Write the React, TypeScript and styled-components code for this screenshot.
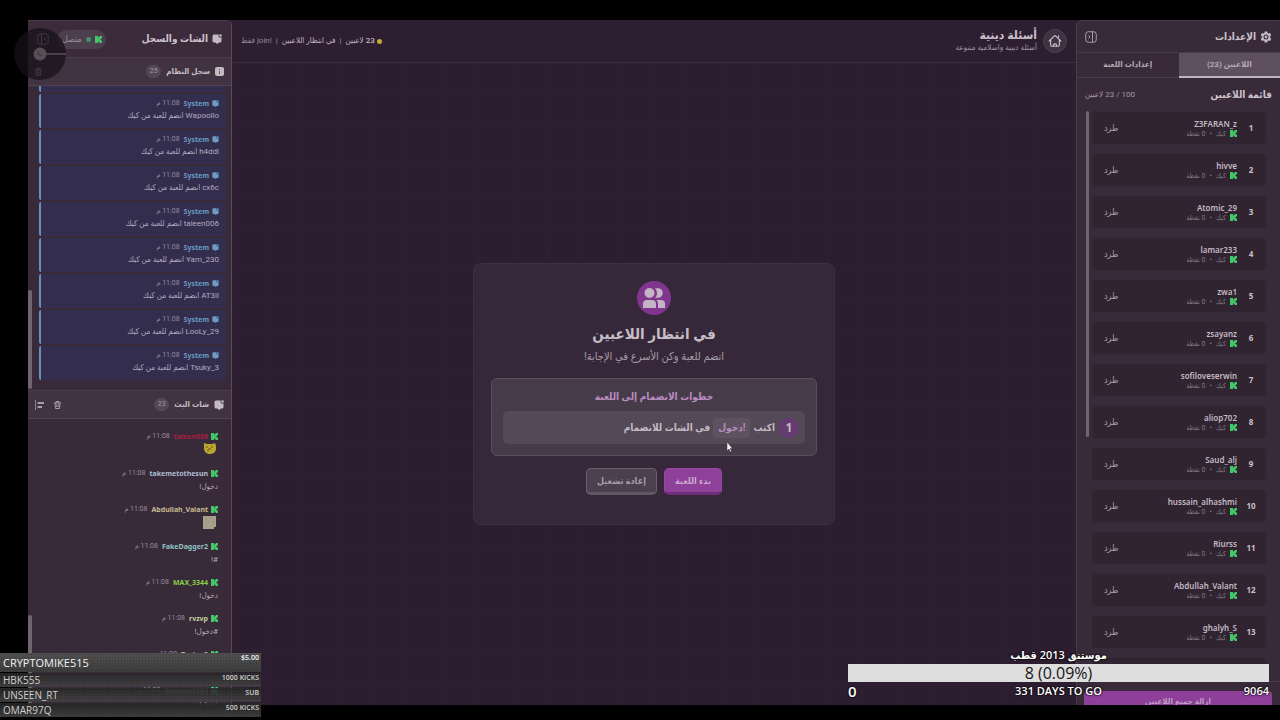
import React from "react";
import styled, { createGlobalStyle } from "styled-components";

const GlobalStyle = createGlobalStyle`
  *, *::before, *::after { box-sizing: border-box; }
  body {
    margin: 0;
    background: #000;
    color: #c2b8c2;
    font-family: Roboto, "DejaVu Sans Condensed", "DejaVu Sans", sans-serif;
    font-size: 9px;
    line-height: 14px;
  }
  h1, h2, h3, p, ul, ol { margin: 0; padding: 0; font-weight: inherit; font-size: inherit; }
  ul, ol { list-style: none; }
  button { font: inherit; color: inherit; padding: 0; border: 0; background: none; cursor: pointer; }
`;

const line = "rgba(255, 255, 255, 0.08)";

const Screen = styled.div`
  position: relative;
  height: 100vh;
  overflow: hidden;
  padding: 20px 0 15px 28px;
`;

const Stage = styled.div`
  display: grid;
  grid-template-columns: 204px minmax(0, 1fr) 204px;
  height: 100%;
  overflow: hidden;
  background: #2d1d30;
`;

const Panel = styled.aside<{ $side: "left" | "right" }>`
  display: flex;
  flex-direction: column;
  min-height: 0;
  overflow: hidden;
  background: #392a3a;
  border-top: 1px solid #4b3b4c;
  ${(p) =>
    p.$side === "right"
      ? "border-left: 1px solid #4b3b4c; border-top-left-radius: 6px;"
      : "border-right: 1px solid #5a4a5a; border-top-right-radius: 6px;"}
`;

const Title = styled.h2`
  display: flex;
  align-items: center;
  gap: 4px;
  font-size: 10px;
  font-weight: 700;
  color: #cbc2cb;
`;

const IconButton = styled.button`
  display: flex;
  align-items: center;
  justify-content: center;
  color: #a89da8;
`;

/* settings panel */

const SettingsHeader = styled.header`
  display: flex;
  align-items: center;
  justify-content: space-between;
  flex: none;
  height: 32px;
  padding: 0 8px;
  border-bottom: 1px solid ${line};
`;

const Tabs = styled.div`
  display: grid;
  grid-template-columns: 1fr 1fr;
  flex: none;
  height: 25px;
`;

const Tab = styled.button<{ $active?: boolean }>`
  font-size: 8px;
  font-weight: 700;
  color: #b5abb5;
  background: ${(p) => (p.$active ? "#5e505e" : "transparent")};
  border-bottom: ${(p) => (p.$active ? "2px solid #bdb5bd" : `1px solid ${line}`)};
`;

const ListHeading = styled.div`
  display: flex;
  align-items: center;
  justify-content: space-between;
  flex: none;
  height: 33px;
  padding: 0 8px;
`;

const Muted = styled.span`
  font-size: 8px;
  color: #a398a3;
`;

const ScrollArea = styled.div`
  display: flex;
  flex: 1;
  min-height: 0;
  overflow: hidden;
`;

const PlayerScroll = styled(ScrollArea)`
  gap: 2px;
  padding: 0 13px 0 9px;
`;

const PlayerList = styled.ol`
  display: flex;
  flex-direction: column;
  gap: 8px;
  flex: 1;
  min-width: 0;
`;

const PlayerCard = styled.li`
  display: flex;
  align-items: center;
  flex: none;
  height: 34px;
  padding: 0 7px 0 12px;
  background: #2f2430;
  border: 1px solid #362a37;
  border-radius: 4px;
`;

const Rank = styled.span`
  width: 16px;
  text-align: center;
  font-family: "Noto Sans", sans-serif;
  font-size: 8px;
  font-weight: 700;
  color: #c9c0c9;
`;

const PlayerInfo = styled.div`
  flex: 1;
  min-width: 0;
  padding-right: 6px;
`;

const PlayerName = styled.div`
  font-family: "Noto Sans", sans-serif;
  font-size: 8px;
  line-height: 11px;
  font-weight: 600;
  color: #c4bac4;
`;

const PlayerMeta = styled.div`
  display: flex;
  align-items: center;
  gap: 4px;
  font-size: 7px;
  line-height: 10px;
  color: #857a86;
`;

const KickButton = styled.button`
  font-size: 9px;
  color: #a99eaa;
`;

const Thumb = styled.span<{ $length: number; $end?: number; $wide?: boolean }>`
  flex: none;
  width: ${(p) => (p.$wide ? 4 : 3)}px;
  height: ${(p) => p.$length}px;
  margin-top: ${(p) => (p.$end === undefined ? "0" : "auto")};
  margin-bottom: ${(p) => p.$end ?? 0}px;
  border-radius: 2px;
  background: #706470;
`;

const PanelFooter = styled.footer`
  flex: none;
  height: 24px;
  padding: 9px 8px 0 7px;
  overflow: hidden;
  border-top: 1px solid ${line};
`;

const RemoveAll = styled.button`
  display: block;
  width: 100%;
  height: 22px;
  border-radius: 4px;
  background: #8d3f99;
  color: #bf9cc4;
  font-size: 8px;
  font-weight: 700;
`;

/* centre */

const Center = styled.main`
  display: flex;
  flex-direction: column;
  min-width: 0;
  background-image: repeating-linear-gradient(90deg, rgba(255, 255, 255, 0.012) 0 1px, transparent 1px 35px),
    repeating-linear-gradient(180deg, rgba(255, 255, 255, 0.012) 0 1px, transparent 1px 35px);
`;

const GameHeader = styled.header`
  display: flex;
  align-items: center;
  justify-content: space-between;
  flex: none;
  height: 43px;
  padding: 0 9px;
  background: #2e1e31;
  border-bottom: 1px solid #3d2d40;
`;

const GameBrand = styled.div`
  display: flex;
  align-items: center;
  gap: 6px;
`;

const HomeButton = styled(IconButton)`
  width: 24px;
  height: 24px;
  border-radius: 50%;
  background: #403242;
  border: 1px solid #4d3f4f;
  color: #c6bdc6;
`;

const GameTitle = styled.h1`
  font-size: 12px;
  font-weight: 700;
  color: #c9c0c9;
`;

const GameSubtitle = styled.p`
  font-size: 8px;
  line-height: 12px;
  color: #a096a4;
`;

const Status = styled.div`
  display: flex;
  align-items: center;
  gap: 4px;
  font-size: 8px;
  color: #94899a;
`;

const StatusItem = styled.span`
  display: flex;
  align-items: center;
  gap: 2px;
  font-weight: 500;
  color: #c0b7c2;
`;

const Dot = styled.span<{ $color: string }>`
  width: 5px;
  height: 5px;
  border-radius: 50%;
  background: ${(p) => p.$color};
`;

const Board = styled.div`
  display: flex;
  align-items: center;
  justify-content: center;
  flex: 1;
  padding: 20px 0 0;
`;

const WaitCard = styled.section`
  display: flex;
  flex-direction: column;
  align-items: center;
  width: 362px;
  padding: 17px 17px 29px;
  background: #36283a;
  border: 1px solid #3e3042;
  border-radius: 8px;
`;

const PeopleBadge = styled.div`
  display: flex;
  align-items: center;
  justify-content: center;
  width: 34px;
  height: 34px;
  border-radius: 50%;
  background: #80368c;
`;

const WaitTitle = styled.h2`
  margin-top: 7px;
  font-size: 15px;
  line-height: 24px;
  font-weight: 700;
  color: #c6bec6;
`;

const WaitText = styled.p`
  margin-top: 4px;
  font-size: 11px;
  line-height: 14px;
  color: #a79da9;
`;

const Steps = styled.div`
  width: 100%;
  margin-top: 14px;
  padding: 11px 11px;
  border: 1px solid #5a4e5d;
  border-radius: 6px;
  background: #463b49;
`;

const StepsTitle = styled.h3`
  font-size: 10px;
  line-height: 14px;
  font-weight: 700;
  text-align: center;
  color: #b98bc0;
`;

const Step = styled.div`
  display: flex;
  align-items: center;
  gap: 3px;
  height: 33px;
  margin-top: 7px;
  padding: 0 6px;
  border-radius: 5px;
  background: #534957;
  font-size: 10px;
  font-weight: 700;
  color: #c3bac4;
`;

const StepNumber = styled.span`
  width: 20px;
  height: 20px;
  margin-left: 1px;
  border-radius: 50%;
  background: #653a70;
  font-family: "Noto Sans", sans-serif;
  font-size: 12px;
  line-height: 20px;
  text-align: center;
`;

const Command = styled.code`
  padding: 0 5px;
  border-radius: 4px;
  background: #5e5160;
  color: #b48bbb;
  font-family: inherit;
  font-size: 10px;
  line-height: 20px;
`;

const Actions = styled.div`
  display: flex;
  gap: 7px;
  margin-top: 12px;
`;

const ActionButton = styled.button<{ $primary?: boolean }>`
  height: 27px;
  padding: 0 10px;
  border-radius: 5px;
  font-size: 9px;
  font-weight: 700;
  border: 1px solid ${(p) => (p.$primary ? "#96479f" : "#6b606d")};
  border-bottom-width: 3px;
  border-bottom-color: ${(p) => (p.$primary ? "#6f2d7b" : "#625764")};
  background: ${(p) => (p.$primary ? "#8f4099" : "#4b404d")};
  color: ${(p) => (p.$primary ? "#ccaad0" : "#a89eaa")};
`;

/* chat panel */

const ChatHeader = styled.header`
  display: flex;
  align-items: center;
  flex: none;
  height: 36px;
  padding: 0 9px;
  gap: 8px;
  background: #3c2b3b;
`;

const Connected = styled.span`
  display: flex;
  align-items: center;
  gap: 4px;
  height: 19px;
  margin-right: auto;
  padding: 0 4px 0 5px;
  border-radius: 10px;
  background: #4d3e4d;
  font-size: 9px;
  color: #988d98;
`;

const SectionBar = styled.div`
  display: flex;
  align-items: center;
  gap: 5px;
  flex: none;
  height: 29px;
  padding: 0 7px;
  background: #423342;
  border-top: 1px solid #4b3c4b;
  border-bottom: 1px solid #524352;
`;

const SectionTitle = styled.h3`
  font-size: 8px;
  font-weight: 700;
  color: #c4bbc4;
`;

const Count = styled.span`
  min-width: 15px;
  height: 13px;
  border-radius: 7px;
  background: #554755;
  font-size: 7px;
  line-height: 13px;
  text-align: center;
  color: #a095a8;
`;

const BarTools = styled.div`
  display: flex;
  gap: 10px;
  margin-right: auto;
`;

const LogArea = styled(ScrollArea)`
  flex: none;
  height: 304px;
`;

const LogList = styled.ul`
  display: flex;
  flex-direction: column;
  justify-content: flex-end;
  gap: 2px;
  flex: 1;
  padding: 0 5px 10px 7px;
`;

const LogItem = styled.li`
  flex: none;
  height: 34px;
  padding: 3px 7px;
  background: #332d4e;
  border-left: 2px solid #6592b8;
  border-radius: 2px;
`;

const LineHead = styled.div`
  display: flex;
  align-items: center;
  gap: 3px;
  font-size: 7px;
  line-height: 13px;
`;

const Author = styled.strong<{ $color: string }>`
  font-family: "Noto Sans", sans-serif;
  color: ${(p) => p.$color};
`;

const Time = styled.time`
  padding-right: 1px;
  color: #978c9a;
`;

const LogText = styled.p`
  font-size: 8px;
  line-height: 12px;
  color: #b4abc0;
`;

const ChatList = styled.ul`
  flex: 1;
  min-width: 0;
  padding: 11px 13px 0;
`;

const ChatItem = styled.li`
  padding-bottom: 9px;
  font-size: 8px;
`;

const ChatText = styled.p`
  line-height: 14px;
  color: #b5abb5;
`;

const EmoteLine = styled.div`
  display: flex;
  height: 15px;
  padding: 0 2px;
`;

/* stream overlays */

const Alerts = styled.ul`
  position: absolute;
  left: 0;
  bottom: 3px;
  width: 261px;
  display: flex;
  flex-direction: column;
  gap: 1px;
  direction: ltr;
  font-family: "Open Sans", "Noto Sans", sans-serif;
`;

const Alert = styled.li<{ $top?: boolean }>`
  display: flex;
  justify-content: space-between;
  height: ${(p) => (p.$top ? 19 : 14)}px;
  padding: 0 2px 0 3px;
  background-image: radial-gradient(rgba(0, 0, 0, 0.2) 1px, transparent 1px),
    linear-gradient(${(p) => (p.$top ? "#505050, #3c3c3c" : "rgba(40, 40, 40, 0.9), rgba(68, 68, 68, 0.9)")});
  background-size: 3px 3px, auto;
  font-size: ${(p) => (p.$top ? 11 : 10)}px;
  line-height: ${(p) => (p.$top ? 19 : 14)}px;
  font-weight: ${(p) => (p.$top ? 500 : 400)};
  color: ${(p) => (p.$top ? "#f2f2f2" : "#cfcfcf")};
`;

const Amount = styled.span`
  font-size: 7px;
  line-height: 10px;
  font-weight: 600;
`;

const Goal = styled.section`
  position: absolute;
  right: 11px;
  bottom: 20px;
  width: 421px;
  direction: ltr;
  font-family: "Open Sans", "DejaVu Sans Condensed", "DejaVu Sans", sans-serif;
  font-weight: 600;
  color: #fff;
  text-shadow: 0 0 2px #000, 0 0 2px #000;
`;

const GoalTitle = styled.h2`
  font-size: 11px;
  line-height: 18px;
  font-weight: 600;
  text-align: center;
`;

const GoalBar = styled.div`
  height: 18px;
  background: #dedede;
  color: #161616;
  font-size: 16px;
  line-height: 19px;
  font-weight: 400;
  text-align: center;
  text-shadow: none;
`;

const GoalScale = styled.div`
  display: grid;
  grid-template-columns: 1fr auto 1fr;
  height: 18px;
  font-size: 11px;
  line-height: 18px;
  & > :last-child { text-align: right; }
`;

const GoalStart = styled.span`
  font-size: 15px;
`;

const Facecam = styled.div`
  position: absolute;
  left: 14px;
  top: 28px;
  width: 52px;
  height: 52px;
`;

const Pointer = styled.div`
  position: absolute;
  left: 726px;
  top: 442px;
`;

/* icons */

const KickLogo = ({ size = 7 }: { size?: number }) => (
  <svg width={size} height={size} viewBox="0 0 9 9" fill="#43c56a" aria-hidden="true">
    <path d="M0 0h4v2h1V1h1V0h3v3H8v1H7v1h1v1h1v3H6V8H5V7H4v2H0z" />
  </svg>
);

const ChatIcon = ({ size = 10, color = "#c4bac4" }: { size?: number; color?: string }) => (
  <svg width={size} height={size} viewBox="0 0 20 20" aria-hidden="true">
    <path
      fill={color}
      d="M4 1h10a3.500 3.500 0 0 0 5 5v8a3 3 0 0 1-3 3h-2l-4 3-3-3H4a3 3 0 0 1-3-3V4a3 3 0 0 1 3-3z"
    />
    <circle cx="17" cy="3" r="2.500" fill={color} />
  </svg>
);

const GearIcon = () => (
  <svg width="12" height="12" viewBox="0 0 24 24" aria-hidden="true">
    <path
      fill="#c4bac4"
      fillRule="evenodd"
      d="M9.500 1h5l.7 3.200 1.800 1 3.100-1 2.500 4.300-2.400 2.200v2.600l2.400 2.200-2.500 4.300-3.100-1-1.800 1-.7 3.200h-5l-.7-3.200-1.800-1-3.100 1L1.400 15.500l2.400-2.200v-2.600L1.400 8.500l2.500-4.300 3.100 1 1.800-1zM12 7a5 5 0 1 0 0 10 5 5 0 0 0 0-10zm0 2.200a2.800 2.800 0 1 1 0 5.600 2.800 2.800 0 0 1 0-5.600z"
    />
  </svg>
);

const CollapseIcon = ({ flip }: { flip?: boolean }) => (
  <svg width="12" height="12" viewBox="0 0 24 24" fill="none" stroke="currentColor" strokeWidth="2" aria-hidden="true">
    <rect x="1.500" y="1.500" width="21" height="21" rx="5" />
    <path d={flip ? "M9 2v20M17 9l-3 3 3 3" : "M15 2v20M7 9l3 3-3 3"} />
  </svg>
);

const HomeIcon = () => (
  <svg
    width="14"
    height="14"
    viewBox="0 0 24 24"
    fill="none"
    stroke="currentColor"
    strokeWidth="2"
    strokeLinecap="round"
    strokeLinejoin="round"
    aria-hidden="true"
  >
    <path d="M2 12 10.500 3.500a2 2 0 0 1 3 0L22 12M4.500 10v9a2 2 0 0 0 2 2h11a2 2 0 0 0 2-2v-9M18 5V3" />
    <path d="M9 21a3 4 0 0 1 6 0" />
  </svg>
);

const PeopleIcon = () => (
  <svg width="22" height="20" viewBox="0 0 22 20" fill="#c3b5c5" aria-hidden="true">
    <circle cx="6.500" cy="5" r="5" />
    <path d="M0 20v-4a4 4 0 0 1 4-4h5a4 4 0 0 1 4 4v4zM12 .2h3a4.800 4.800 0 0 1 0 9.600h-3a6.500 6.500 0 0 0 0-9.600zM13.500 12H18a4 4 0 0 1 4 4v4h-7v-4a6 6 0 0 0-1.500-4z" />
  </svg>
);

const InfoIcon = () => (
  <svg width="9" height="9" viewBox="0 0 18 18" aria-hidden="true">
    <rect width="18" height="18" rx="4" fill="#c4bac4" />
    <path d="M9 8v6M9 4v2" stroke="#6a5c6a" strokeWidth="2" />
  </svg>
);

const TrashIcon = () => (
  <svg width="7" height="8" viewBox="0 0 14 16" fill="none" stroke="currentColor" strokeWidth="2" aria-hidden="true">
    <path d="M0 4h14M4 4V1h6v3M2 4l1 11h8l1-11M5.500 7v5M8.500 7v5" />
  </svg>
);

const AlignIcon = () => (
  <svg width="9" height="10" viewBox="0 0 18 20" stroke="currentColor" aria-hidden="true">
    <path d="M1 0v20" strokeWidth="1.500" />
    <path d="M5 6h13M5 14h9" strokeWidth="4" />
  </svg>
);

const CatEmote = () => (
  <svg width="12" height="11" viewBox="0 0 12 11" role="img" aria-label="emote">
    <path d="M0 0l3 1h5l3-1 1 3v4l-2 3-3 1H4L1 9 0 6z" fill="#b9a52f" />
    <path d="M2 4h2M7 4h2M4 6h3M3 8l2-1" stroke="#5d4a20" strokeWidth="0.800" />
  </svg>
);

const PaperEmote = () => (
  <svg width="13" height="13" viewBox="0 0 13 13" role="img" aria-label="emote">
    <path d="M0 0h13v11l-1 2H0z" fill="#a9a08c" />
    <path d="M2 3h2M7 2h2M4 6h2M9 6h2M2 9h2M8 9h1" stroke="#968c79" />
    <path d="M11 11h2v2h-2z" fill="#333" />
  </svg>
);

/* data */

const players = [
  "Z3FARAN_z", "hivve", "Atomic_29", "lamar233", "zwa1", "zsayanz", "sofiloveserwin",
  "aliop702", "Saud_alj", "hussain_alhashmi", "Riurss", "Abdullah_Valant", "ghalyh_S", "Tsuky_3",
];

const joins = ["Z3FARAN_z", "Wapoollo", "h4ddl", "cx6c", "taleen006", "Yam_230", "AT3ll", "LooLy_29", "Tsuky_3"];

type Message = { name: string; color: string; text?: string; emote?: React.ReactNode };

const messages: Message[] = [
  { name: "taleen006", color: "#a51f45", emote: <CatEmote /> },
  { name: "takemetothesun", color: "#a9bfd0", text: "دخول!" },
  { name: "Abdullah_Valant", color: "#c5b98c", emote: <PaperEmote /> },
  { name: "FakeDagger2", color: "#8fc3c4", text: "#!" },
  { name: "MAX_3344", color: "#86cf45", text: "دخول!" },
  { name: "rvzvp", color: "#bdcf9a", text: "#دخول!" },
  { name: "Tsuky_3", color: "#b8b3a8", text: "دخول!" },
  { name: "Kasema1234", color: "#b8b3b8", text: "دخول!" },
];

const Stamp = () => <Time>11:08 م</Time>;

export default function App() {
  return (
    <Screen dir="rtl" lang="ar">
      <GlobalStyle />
      <Stage>
        <Panel $side="right">
          <SettingsHeader>
            <Title><GearIcon />الإعدادات</Title>
            <IconButton aria-label="طي الإعدادات"><CollapseIcon /></IconButton>
          </SettingsHeader>
          <Tabs role="tablist">
            <Tab role="tab" aria-selected="true" $active>اللاعبين (23)</Tab>
            <Tab role="tab" aria-selected="false">إعدادات اللعبة</Tab>
          </Tabs>
          <ListHeading>
            <Title as="h3">قائمة اللاعبين</Title>
            <Muted>100 / 23 لاعبين</Muted>
          </ListHeading>
          <PlayerScroll>
            <PlayerList>
              {players.map((name, i) => (
                <PlayerCard key={name}>
                  <Rank>{i + 1}</Rank>
                  <PlayerInfo>
                    <PlayerName>{name}</PlayerName>
                    <PlayerMeta>
                      <KickLogo />
                      <span>كيك</span>
                      <span>•</span>
                      <span>0 نقطة</span>
                    </PlayerMeta>
                  </PlayerInfo>
                  <KickButton>طرد</KickButton>
                </PlayerCard>
              ))}
            </PlayerList>
            <Thumb $length={326} />
          </PlayerScroll>
          <PanelFooter>
            <RemoveAll>ازالة جميع اللاعبين</RemoveAll>
          </PanelFooter>
        </Panel>

        <Center>
          <GameHeader>
            <GameBrand>
              <HomeButton aria-label="الرئيسية"><HomeIcon /></HomeButton>
              <div>
                <GameTitle>أسئلة دينية</GameTitle>
                <GameSubtitle>أسئلة دينية واسلامية متنوعة</GameSubtitle>
              </div>
            </GameBrand>
            <Status>
              <StatusItem><Dot $color="#c5ad35" />23 لاعبين</StatusItem>
              <span>|</span>
              <StatusItem>في انتظار اللاعبين</StatusItem>
              <span>|</span>
              <span>!join فقط</span>
            </Status>
          </GameHeader>
          <Board>
            <WaitCard>
              <PeopleBadge><PeopleIcon /></PeopleBadge>
              <WaitTitle>في انتظار اللاعبين</WaitTitle>
              <WaitText>انضم للعبة وكن الأسرع في الإجابة!</WaitText>
              <Steps>
                <StepsTitle>خطوات الانضمام إلى اللعبة</StepsTitle>
                <Step>
                  <StepNumber>1</StepNumber>
                  <span>اكتب</span>
                  <Command>!دخول</Command>
                  <span>في الشات للانضمام</span>
                </Step>
              </Steps>
              <Actions>
                <ActionButton $primary>بدء اللعبة</ActionButton>
                <ActionButton>إعادة تشغيل</ActionButton>
              </Actions>
            </WaitCard>
          </Board>
        </Center>

        <Panel $side="left">
          <ChatHeader>
            <Title><ChatIcon />الشات والسجل</Title>
            <Connected><KickLogo /><Dot $color="#3f9068" />متصل</Connected>
            <IconButton aria-label="طي الشات"><CollapseIcon flip /></IconButton>
          </ChatHeader>
          <SectionBar>
            <InfoIcon />
            <SectionTitle>سجل النظام</SectionTitle>
            <Count>25</Count>
            <BarTools>
              <IconButton aria-label="مسح السجل"><TrashIcon /></IconButton>
            </BarTools>
          </SectionBar>
          <LogArea>
            <LogList>
              {joins.map((name) => (
                <LogItem key={name}>
                  <LineHead>
                    <ChatIcon size={7} color="#6a9cc0" />
                    <Author $color="#6a9cc0">System</Author>
                    <Stamp />
                  </LineHead>
                  <LogText>{name} انضم للعبة من كيك</LogText>
                </LogItem>
              ))}
            </LogList>
            <Thumb $wide $length={99} $end={1} />
          </LogArea>
          <SectionBar>
            <ChatIcon />
            <SectionTitle>شات البث</SectionTitle>
            <Count>23</Count>
            <BarTools>
              <IconButton aria-label="مسح الشات"><TrashIcon /></IconButton>
              <IconButton aria-label="محاذاة"><AlignIcon /></IconButton>
            </BarTools>
          </SectionBar>
          <ScrollArea>
            <ChatList>
              {messages.map((m) => (
                <ChatItem key={m.name}>
                  <LineHead>
                    <KickLogo />
                    <Author $color={m.color}>{m.name}</Author>
                    <Stamp />
                  </LineHead>
                  {m.emote ? <EmoteLine>{m.emote}</EmoteLine> : <ChatText>{m.text}</ChatText>}
                </ChatItem>
              ))}
            </ChatList>
            <Thumb $wide $length={90} $end={0} />
          </ScrollArea>
        </Panel>
      </Stage>

      <Facecam>
        <svg width="52" height="52" viewBox="0 0 52 52" aria-hidden="true">
          <circle cx="26" cy="26" r="26" fill="#161016" fillOpacity="0.720" />
          <path d="M32 26h20" stroke="#4a424a" strokeWidth="2" />
          <circle cx="26" cy="26" r="6.500" fill="#575057" />
          <path d="M24 23v3l4 2" fill="none" stroke="#3a343a" />
        </svg>
      </Facecam>

      <Pointer>
        <svg width="7" height="11" viewBox="0 0 7 11" aria-hidden="true">
          <path d="M1 0v9l2-2 1 3 1.500-.6L4.300 6.500H6.500z" fill="#f4f4f4" stroke="#333" strokeWidth="0.500" />
        </svg>
      </Pointer>

      <Alerts>
        <Alert $top>CRYPTOMIKE515<Amount>$5.00</Amount></Alert>
        <Alert>HBK555<Amount>1000 KICKS</Amount></Alert>
        <Alert>UNSEEN_RT<Amount>SUB</Amount></Alert>
        <Alert>OMAR97Q<Amount>500 KICKS</Amount></Alert>
      </Alerts>

      <Goal>
        <GoalTitle dir="rtl">موستنق 2013 قطب</GoalTitle>
        <GoalBar>8 (0.09%)</GoalBar>
        <GoalScale>
          <GoalStart>0</GoalStart>
          <span>331 DAYS TO GO</span>
          <span>9064</span>
        </GoalScale>
      </Goal>
    </Screen>
  );
}
